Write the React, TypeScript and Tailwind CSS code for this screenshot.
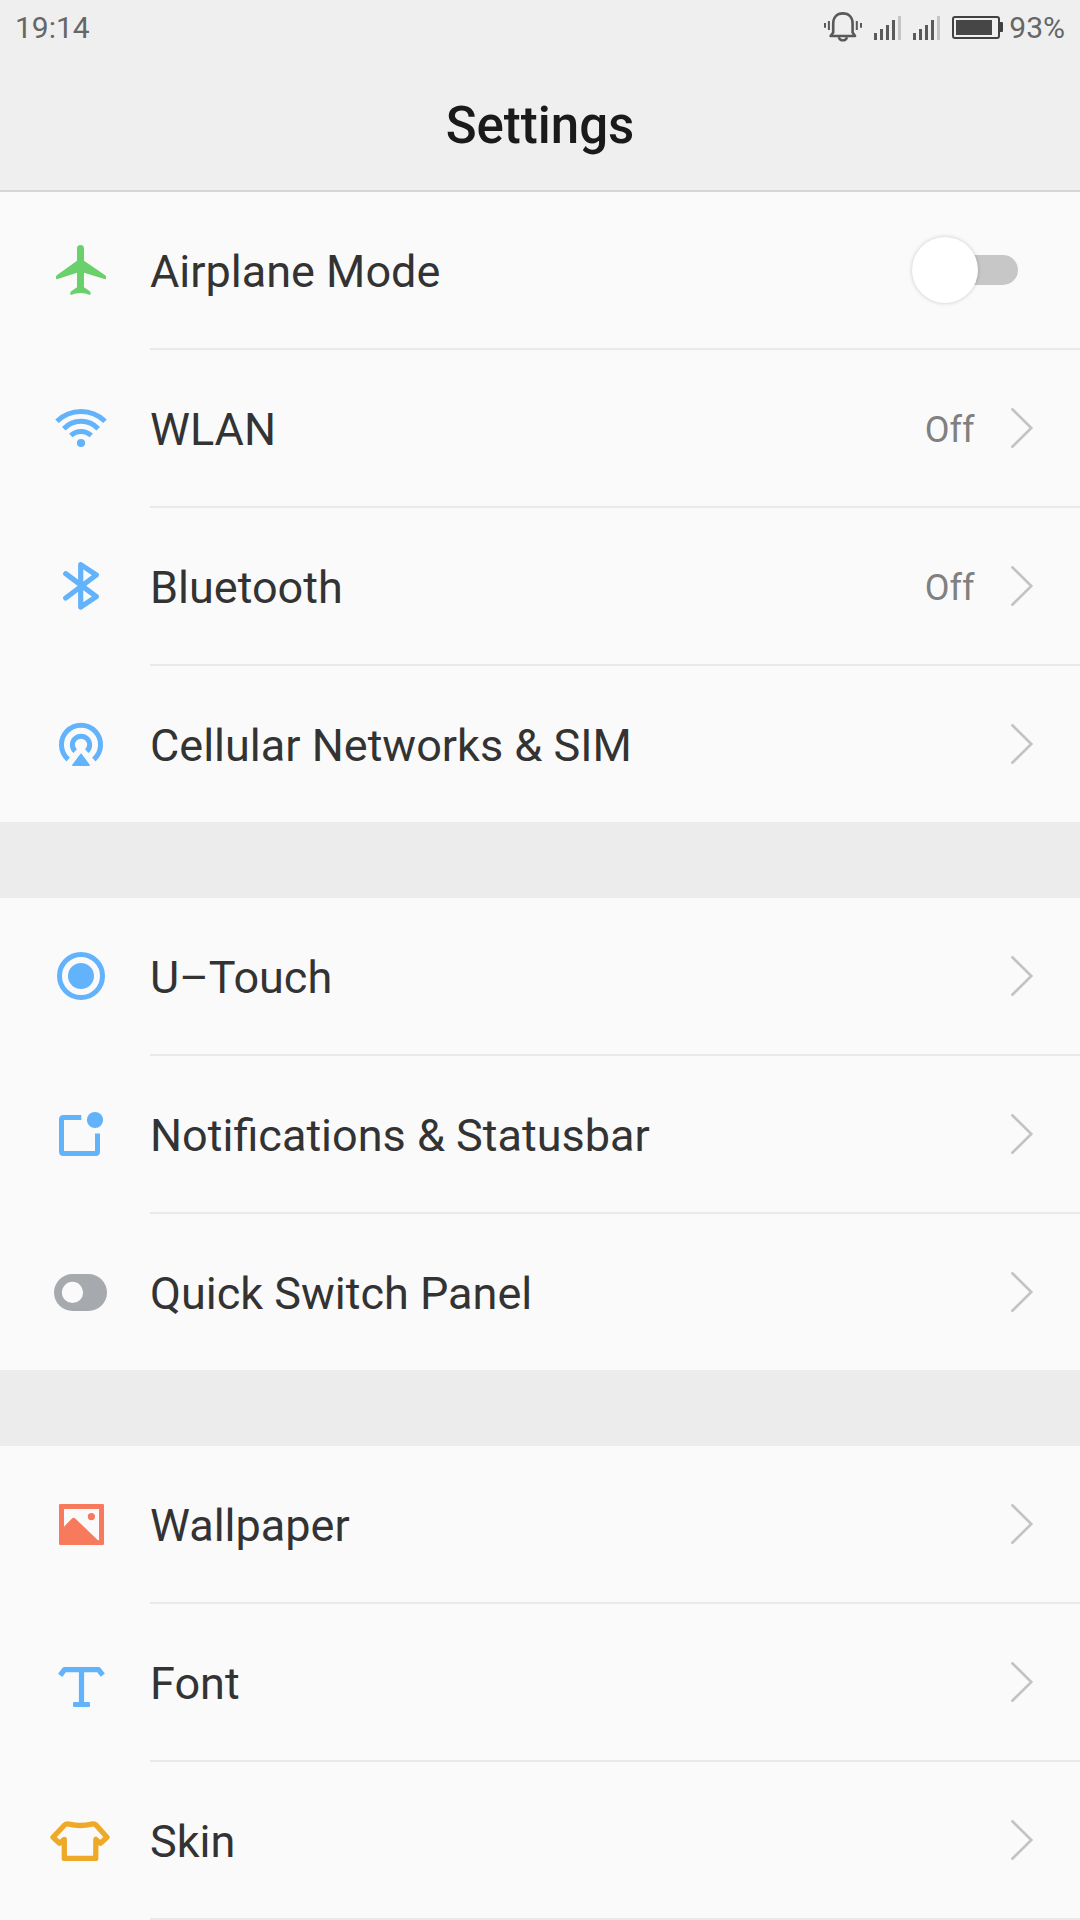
import type { ReactNode } from "react";

const BLUE = "#62b3fb";

interface SettingItem {
  label: string;
  icon: ReactNode;
  value?: string;
  toggle?: boolean;
}

function Icon({ children }: { children: ReactNode }) {
  return (
    <svg width="64" height="64" viewBox="0 0 64 64" fill="none" className="flex-none">
      {children}
    </svg>
  );
}

function AirplaneIcon() {
  return (
    <Icon>
      <path
        d="M28 10.5a3.5 3.5 0 0 1 7 0V22.7L56.2 37.2Q57 37.8 57 38.8V40Q57 41.6 55.4 41.1L35 34.7V49.2L40.8 53.3Q41.8 54.2 41.5 56.2L41.2 57Q36.5 55 31.5 55T21.8 57L21.4 56.2Q21.2 54.2 22.2 53.3L28 49.2V34.7L8.6 41.1Q7 41.6 7 40V38.8Q7 37.8 7.8 37.2L28 22.7Z"
        fill="#69d06c"
      />
    </Icon>
  );
}

function WlanIcon() {
  return (
    <Icon>
      <g stroke={BLUE} strokeWidth="5">
        <path d="M8 25.3A34.3 34.3 0 0 1 56 25.3" />
        <path d="M14.8 32.7A23.6 23.6 0 0 1 49.2 32.7" />
        <path d="M21.8 39.5A14.9 14.9 0 0 1 42.2 39.5" />
      </g>
      <circle cx="32" cy="47" r="4.1" fill={BLUE} />
    </Icon>
  );
}

function BluetoothIcon() {
  return (
    <Icon>
      <path
        d="M16.7 19.7L47.3 42.7L31.7 53V10.7L47.3 21L16.7 44"
        stroke={BLUE}
        strokeWidth="5.2"
        strokeLinecap="round"
        strokeLinejoin="round"
      />
    </Icon>
  );
}

function CellularIcon() {
  return (
    <Icon>
      <g stroke={BLUE} strokeWidth="5">
        <path d="M19.2 47.5A19.55 19.55 0 1 1 44.8 47.5" />
        <path d="M26.2 39.2A8.6 8.6 0 1 1 37.8 39.2" />
      </g>
      <path d="M32 42.2L40.2 53.2H23.8Z" fill={BLUE} stroke={BLUE} strokeWidth="1.4" strokeLinejoin="round" />
    </Icon>
  );
}

function TouchIcon() {
  return (
    <Icon>
      <circle cx="32" cy="32" r="21.5" stroke={BLUE} strokeWidth="5" />
      <circle cx="32" cy="32" r="13" fill={BLUE} />
    </Icon>
  );
}

function NotificationIcon() {
  return (
    <Icon>
      <path
        d="M32.3 15.5H14.5Q12.5 15.5 12.5 17.5V49.5Q12.5 51.5 14.5 51.5H46.5Q48.5 51.5 48.5 49.5V31.4"
        stroke={BLUE}
        strokeWidth="5"
      />
      <circle cx="46" cy="18" r="8.1" fill={BLUE} />
    </Icon>
  );
}

function SwitchPanelIcon() {
  return (
    <Icon>
      <rect x="5" y="14" width="53" height="37" rx="18.5" fill="#a6aaae" />
      <circle cx="23.5" cy="32.4" r="10.6" fill="#fafafa" />
    </Icon>
  );
}

function WallpaperIcon() {
  return (
    <Icon>
      <rect x="10" y="12" width="45" height="41" rx="1.3" fill="#f87a5d" />
      <path d="M15 17H50V48.3H49L26 26.3Q24.6 25 23.2 26.3L15 34.7Z" fill="#fafafa" />
      <circle cx="42.4" cy="24.6" r="3.6" fill="#f87a5d" />
    </Icon>
  );
}

function FontIcon() {
  return (
    <Icon>
      <g stroke={BLUE} strokeWidth="5.2">
        <path d="M11.2 25.4L15.5 19.6H49.5L53.8 25.1" strokeLinejoin="round" />
        <path d="M32.5 19.5V54" />
      </g>
      <rect x="24" y="52" width="17" height="5" rx="1.2" fill={BLUE} />
    </Icon>
  );
}

function SkinIcon() {
  return (
    <Icon>
      <path
        d="M4 29.3L15.6 17Q17.2 15.4 20 16.1Q31.3 18.9 42.8 16.1Q45.6 15.4 47 17L58 29.3L51.4 35.2L46.9 31.4L46.7 50.4H15.3V31.4L10.6 35.2Z"
        stroke="#efa928"
        strokeWidth="5.3"
        strokeLinejoin="round"
      />
    </Icon>
  );
}

const groups: SettingItem[][] = [
  [
    { label: "Airplane Mode", icon: <AirplaneIcon />, toggle: true },
    { label: "WLAN", icon: <WlanIcon />, value: "Off" },
    { label: "Bluetooth", icon: <BluetoothIcon />, value: "Off" },
    { label: "Cellular Networks & SIM", icon: <CellularIcon /> },
  ],
  [
    { label: "U–Touch", icon: <TouchIcon /> },
    { label: "Notifications & Statusbar", icon: <NotificationIcon /> },
    { label: "Quick Switch Panel", icon: <SwitchPanelIcon /> },
  ],
  [
    { label: "Wallpaper", icon: <WallpaperIcon /> },
    { label: "Font", icon: <FontIcon /> },
    { label: "Skin", icon: <SkinIcon /> },
  ],
];

function BellIcon() {
  return (
    <svg width="40" height="32" viewBox="0 0 40 32" fill="none">
      <path
        d="M6.6 25L9.2 21.5V12.5C9.2 6.3 13 2.4 18.9 2.4S28.6 6.3 28.6 12.5V21.5L31 25Z"
        stroke="#595959"
        strokeWidth="2.6"
        strokeLinejoin="round"
      />
      <path d="M14.6 26.2Q16 29.4 18.9 29.4T23.2 26.2" stroke="#595959" strokeWidth="2.4" />
      <path d="M1 12V16.8M4.9 10V19M32.8 10V19M37 12V16.8" stroke="#595959" strokeWidth="2" />
    </svg>
  );
}

function SignalIcon() {
  return (
    <svg width="27" height="24" viewBox="0 0 27 24">
      <path d="M0 17h3v7h-3zM6 13h3v11h-3zM12 9h3v15h-3zM18 4h3v20h-3z" fill="#5a5a5a" />
      <path d="M24 0h3v24h-3z" fill="#c4c4c4" />
    </svg>
  );
}

function BatteryIcon() {
  return (
    <svg width="51" height="23" viewBox="0 0 51 23" fill="none">
      <rect x="1" y="1" width="46" height="21" rx="2" stroke="#414141" strokeWidth="2" />
      <rect x="4" y="4" width="36" height="15" fill="#464646" />
      <path d="M48 6h2q1 0 1 1v8q0 1-1 1h-2z" fill="#414141" />
    </svg>
  );
}

function Toggle() {
  return (
    <div className="relative mr-[62px] h-[66px] w-[106px]">
      <div className="absolute top-[18px] right-0 h-[30px] w-[76px] rounded-full bg-[#c7c7c7]" />
      <div className="absolute top-0 left-0 size-[66px] rounded-full bg-white shadow-[0_0_4px_rgba(0,0,0,0.2)]" />
    </div>
  );
}

function Chevron() {
  return (
    <svg width="24" height="42" viewBox="0 0 24 42" fill="none" className="mr-[46px] flex-none">
      <path d="M2.3 2.3L21.3 21L2.3 39.7" stroke="#c3c3c3" strokeWidth="2.6" strokeLinecap="round" />
    </svg>
  );
}

function SettingRow({ item, divider }: { item: SettingItem; divider: boolean }) {
  return (
    <div className="flex">
      <div className="flex h-[156px] w-[150px] flex-none items-center pl-[49px]">{item.icon}</div>
      <div className={`flex flex-1 items-center ${divider ? "h-[158px] border-b-2 border-[#e9e9e9]" : "h-[156px]"}`}>
        <span className="flex-1 pt-1 text-[45px] leading-[52px] whitespace-nowrap text-[#333333]">{item.label}</span>
        {item.value && <span className="mr-[35.5px] pt-1 text-[36px] leading-[42px] text-[#808080]">{item.value}</span>}
        {item.toggle ? <Toggle /> : <Chevron />}
      </div>
    </div>
  );
}

export default function App() {
  return (
    <div className="h-[1920px] w-[1080px] overflow-hidden bg-[#ececec] font-[Roboto,sans-serif]">
      {/* Status bar + title */}
      <header className="h-[192px] border-b-2 border-[#d6d6d6] bg-[#efefef]">
        <div className="flex h-[54px] items-center justify-between px-[15px] text-[30px] text-[#666666]">
          <span>19:14</span>
          <div className="flex items-center">
            <BellIcon />
            <div className="ml-[10px] flex gap-3 pt-[2px]">
              <SignalIcon />
              <SignalIcon />
            </div>
            <div className="mr-[6px] ml-3 pt-px">
              <BatteryIcon />
            </div>
            <span>93%</span>
          </div>
        </div>
        <h1 className="pt-[42px] text-center text-[51px] leading-[60px] font-medium text-[#1a1a1a]">Settings</h1>
      </header>

      <main className="flex flex-col gap-[76px]">
        {groups.map((items, g) => (
          <section key={g} className="bg-[#fafafa]">
            {items.map((item, i) => (
              <SettingRow key={item.label} item={item} divider={i < items.length - 1 || g === groups.length - 1} />
            ))}
          </section>
        ))}
      </main>
    </div>
  );
}
